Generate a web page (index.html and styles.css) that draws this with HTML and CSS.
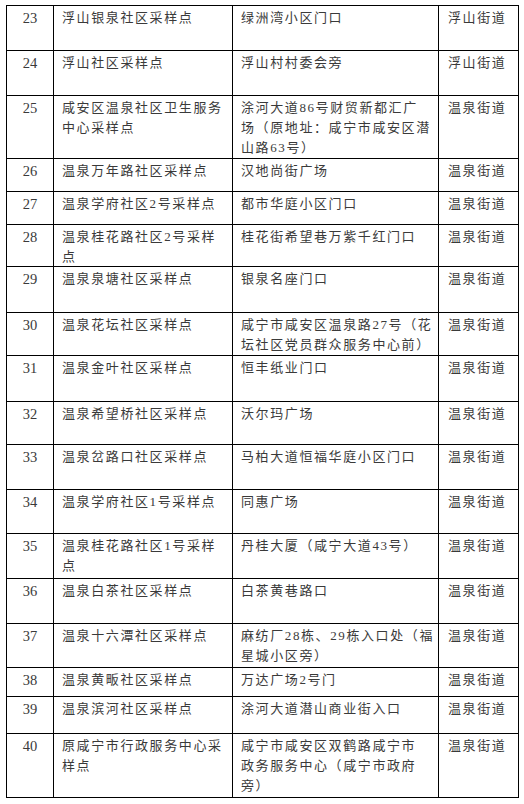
FILE: index.html
```html
<!DOCTYPE html>
<html lang="zh-CN">
<head>
<meta charset="utf-8">
<title>采样点列表</title>
<link rel="stylesheet" href="styles.css">
</head>
<body>
<div class="sites">
  <div class="row h45"><div class="cell no">23</div><div class="cell">浮山银泉社区采样点</div><div class="cell">绿洲湾小区门口</div><div class="cell st">浮山街道</div></div>
  <div class="row h45"><div class="cell no">24</div><div class="cell">浮山社区采样点</div><div class="cell">浮山村村委会旁</div><div class="cell st">浮山街道</div></div>
  <div class="row h63"><div class="cell no">25</div><div class="cell">咸安区温泉社区卫生服务<br>中心采样点</div><div class="cell">涂河大道86号财贸新都汇广<br>场（原地址：咸宁市咸安区潜<br>山路63号）</div><div class="cell st">温泉街道</div></div>
  <div class="row h33"><div class="cell no">26</div><div class="cell">温泉万年路社区采样点</div><div class="cell">汉地尚街广场</div><div class="cell st">温泉街道</div></div>
  <div class="row h33"><div class="cell no">27</div><div class="cell">温泉学府社区2号采样点</div><div class="cell">都市华庭小区门口</div><div class="cell st">温泉街道</div></div>
  <div class="row h42"><div class="cell no">28</div><div class="cell">温泉桂花路社区2号采样<br>点</div><div class="cell">桂花街希望巷万紫千红门口</div><div class="cell st">温泉街道</div></div>
  <div class="row h46"><div class="cell no">29</div><div class="cell">温泉泉塘社区采样点</div><div class="cell">银泉名座门口</div><div class="cell st">温泉街道</div></div>
  <div class="row h43"><div class="cell no">30</div><div class="cell">温泉花坛社区采样点</div><div class="cell">咸宁市咸安区温泉路27号（花<br>坛社区党员群众服务中心前）</div><div class="cell st">温泉街道</div></div>
  <div class="row h46"><div class="cell no">31</div><div class="cell">温泉金叶社区采样点</div><div class="cell">恒丰纸业门口</div><div class="cell st">温泉街道</div></div>
  <div class="row h43"><div class="cell no">32</div><div class="cell">温泉希望桥社区采样点</div><div class="cell">沃尔玛广场</div><div class="cell st">温泉街道</div></div>
  <div class="row h45"><div class="cell no">33</div><div class="cell">温泉岔路口社区采样点</div><div class="cell">马柏大道恒福华庭小区门口</div><div class="cell st">温泉街道</div></div>
  <div class="row h44"><div class="cell no">34</div><div class="cell">温泉学府社区1号采样点</div><div class="cell">同惠广场</div><div class="cell st">温泉街道</div></div>
  <div class="row h45"><div class="cell no">35</div><div class="cell">温泉桂花路社区1号采样<br>点</div><div class="cell">丹桂大厦（咸宁大道43号）</div><div class="cell st">温泉街道</div></div>
  <div class="row h45"><div class="cell no">36</div><div class="cell">温泉白茶社区采样点</div><div class="cell">白茶黄巷路口</div><div class="cell st">温泉街道</div></div>
  <div class="row h44"><div class="cell no">37</div><div class="cell">温泉十六潭社区采样点</div><div class="cell">麻纺厂28栋、29栋入口处（福<br>星城小区旁）</div><div class="cell st">温泉街道</div></div>
  <div class="row h29"><div class="cell no">38</div><div class="cell">温泉黄畈社区采样点</div><div class="cell">万达广场2号门</div><div class="cell st">温泉街道</div></div>
  <div class="row h37"><div class="cell no">39</div><div class="cell">温泉滨河社区采样点</div><div class="cell">涂河大道潜山商业街入口</div><div class="cell st">温泉街道</div></div>
  <div class="row h64"><div class="cell no">40</div><div class="cell">原咸宁市行政服务中心采<br>样点</div><div class="cell">咸宁市咸安区双鹤路咸宁市<br>政务服务中心（咸宁市政府<br>旁）</div><div class="cell st">温泉街道</div></div>
</div>
</body>
</html>
```
FILE: styles.css
```css
html, body {
  margin: 0;
  padding: 0;
  background: #ffffff;
}

body {
  padding: 5px 0 0 6px;
}

.sites {
  width: 513px;
  box-sizing: border-box;
  border-top: 1px solid #000;
  border-left: 1px solid #000;
  font-family: "Liberation Serif", "Noto Sans CJK SC", serif;
  font-size: 13px;
  color: #3a3a3a;
}

.row {
  display: grid;
  grid-template-columns: 47px 179px 206px 80px;
  box-sizing: border-box;
  border-bottom: 1px solid #000;
  overflow: hidden;
}

.cell {
  border-right: 1px solid #000;
  padding: 2px 4px 0 8px;
  line-height: 20px;
  letter-spacing: 1.6px;
  white-space: nowrap;
  overflow: hidden;
}

.cell.no {
  text-align: center;
  padding: 2px 0 0 0;
  font-size: 14.5px;
  letter-spacing: 0;
}

.cell.st {
  padding-left: 9px;
}

.h29 { height: 29px; }
.h33 { height: 33px; }
.h37 { height: 37px; }
.h42 { height: 42px; }
.h43 { height: 43px; }
.h44 { height: 44px; }
.h45 { height: 45px; }
.h46 { height: 46px; }
.h63 { height: 63px; }
.h64 { height: 64px; }
```
